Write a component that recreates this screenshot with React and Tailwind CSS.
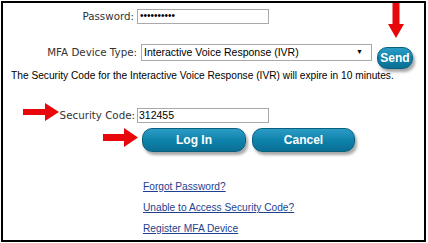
export default function App() {
  const label = "font-['DejaVu_Sans',sans-serif] text-[10.3px] text-[#333] leading-none";
  const btn =
    "rounded-[10px] bg-gradient-to-b from-[#2a9cc6] via-[#0f83ad] to-[#0a6f94] text-white font-bold text-[12px] font-['Liberation_Sans',Arial,sans-serif] shadow-[2px_3px_3px_rgba(0,0,0,0.35)] border border-[#0b5f7e] flex items-center justify-center";
  return (
    <div className="w-[428px] h-[243px] bg-white relative overflow-hidden font-['Liberation_Sans',Arial,sans-serif]">
      <div className="absolute left-[1px] top-[1px] w-[425px] h-[241px] border-2 border-black pointer-events-none" />
      <div className="flex flex-col pt-[8px]">
        {/* Password row */}
        <div className="flex items-center h-[16px]">
          <div className={`${label} w-[137px] text-right pr-[3px]`}>Password:</div>
          <div className="w-[132px] h-[15px] border border-[#a9a9a9] flex items-center pl-[2px] text-[10px] text-black leading-none">
            ••••••••••
          </div>
        </div>
        {/* MFA row */}
        <div className="flex items-start mt-[20px] h-[17px]">
          <div className={`${label} w-[141px] text-right pr-[4px] self-center`}>MFA Device Type:</div>
          <div className="w-[231px] h-[17px] border border-[#a9a9a9] flex items-center pl-[2px] pr-[8px] text-[10.5px] text-black justify-between">
            <span>Interactive Voice Response (IVR)</span>
            <span className="text-[7px]">▼</span>
          </div>
          <div className={`${btn} ml-[5px] w-[36px] h-[22px] rounded-[8px] mt-[3px] text-[11px] shrink-0`}>Send</div>
        </div>
        {/* Info */}
        <div className="mt-[8px] pl-[11px] text-[10.2px] leading-[14px] text-black">
          The Security Code for the Interactive Voice Response (IVR) will expire in 10 minutes.
        </div>
        {/* Security code */}
        <div className="flex items-center mt-[25px] h-[15px]">
          <div className={`${label} w-[137px] text-right pr-[2px]`}>Security Code:</div>
          <div className="w-[132px] h-[15px] border border-[#a9a9a9] flex items-center pl-[1px] text-[10.5px] text-black">
            312455
          </div>
        </div>
        {/* Buttons */}
        <div className="flex mt-[5px] pl-[142px] gap-[6px]">
          <div className={`${btn} w-[104px] h-[24px]`}>Log In</div>
          <div className={`${btn} w-[103px] h-[24px]`}>Cancel</div>
        </div>
        {/* Links */}
        <div className="flex flex-col pl-[143px] mt-[28px] gap-[7px] text-[10.2px] text-[#1f3f8f]">
          <a className="underline leading-[14px]">Forgot Password?</a>
          <a className="underline leading-[14px]">Unable to Access Security Code?</a>
          <a className="underline leading-[14px]">Register MFA Device</a>
        </div>
      </div>

      {/* Red arrows */}
      <svg className="absolute left-[388px] top-[3px]" width="16" height="35" viewBox="0 0 16 35">
        <polygon points="4.5,0 11.5,0 11.5,21 16,21 8,35 0,21 4.5,21" fill="#e8070b" />
      </svg>
      <svg className="absolute left-[23px] top-[103px]" width="36" height="18" viewBox="0 0 36 18">
        <polygon points="0,6 22,6 22,0 36,9 22,18 22,12 0,12" fill="#e8070b" />
      </svg>
      <svg className="absolute left-[103px] top-[128px]" width="35" height="19" viewBox="0 0 35 19">
        <polygon points="0,6 21,6 21,0 35,9.5 21,19 21,13 0,13" fill="#e8070b" />
      </svg>
    </div>
  );
}
